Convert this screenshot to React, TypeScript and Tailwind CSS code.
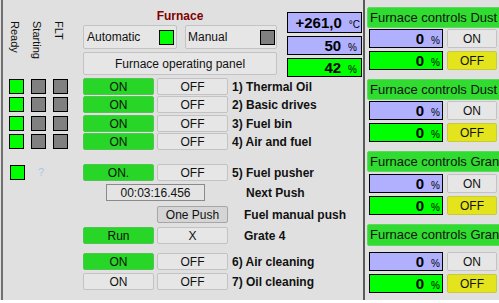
import React from 'react';

type Variant = 'green' | 'gray' | 'dark' | 'yellow';

const variantCls: Record<Variant, string> = {
  green: 'bg-[#27d627] border-[#52c452]',
  gray: 'bg-[#e6e6e6] border-[#c3c3c3]',
  dark: 'bg-[#d5d5d5] border-[#a6a6a6]',
  yellow: 'bg-[#e4e41c] border-[#c9c93a]',
};

const Btn: React.FC<{ label: string; variant?: Variant; className?: string }> = ({
  label,
  variant = 'gray',
  className = '',
}) => (
  <div
    className={`flex items-center justify-center rounded-[2px] border text-[12px] leading-none text-[#111] ${variantCls[variant]} ${className}`}
  >
    {label}
  </div>
);

const Lamp: React.FC<{ on?: boolean }> = ({ on }) => (
  <div className={`h-[15px] w-[15px] shrink-0 border border-black ${on ? 'bg-[#00ff00]' : 'bg-[#808080]'}`} />
);

const Val: React.FC<{ value: string; unit: string; green?: boolean; className?: string; pr?: string }> = ({
  value,
  unit,
  green,
  className = '',
  pr = 'pr-[4px]',
}) => (
  <div
    className={`flex items-center justify-end border border-black ${green ? 'bg-[#00ff00]' : 'bg-[#b0b0ff]'} ${pr} ${className}`}
  >
    <div className="flex items-baseline">
      <span className="text-[15px] font-bold leading-none text-black">{value}</span>
      <span className="ml-[7px] text-[10px] leading-none text-black">{unit}</span>
    </div>
  </div>
);

const Row: React.FC<{
  lamps?: boolean[];
  on: boolean;
  onLabel?: string;
  label: string;
  className?: string;
}> = ({ lamps, on, onLabel = 'ON', label, className = '' }) => (
  <div className={`flex h-[17px] items-center ${className}`}>
    <div className="flex w-[80px] gap-[7px] pl-[6px]">
      {lamps?.map((l, i) => <Lamp key={i} on={l} />)}
    </div>
    <Btn label={onLabel} variant={on ? 'green' : 'gray'} className="h-full w-[71px]" />
    <Btn label="OFF" className="ml-[3px] h-full w-[71px]" />
    <span className="ml-[4px] text-[12px] font-bold text-[#111]">{label}</span>
  </div>
);

const groups = [
  { title: 'Furnace controls Dust', mt: 'mt-[7px]', head: 'h-[21px]', gap: 'mt-[1px]' },
  { title: 'Furnace controls Dust', mt: 'mt-[9px]', head: 'h-[21px]', gap: 'mt-[1px]' },
  { title: 'Furnace controls Gran', mt: 'mt-[9px]', head: 'h-[21px]', gap: 'mt-[2px]' },
  { title: 'Furnace controls Gran', mt: 'mt-[9px]', head: 'h-[22px]', gap: 'mt-[6px]' },
];

export default function App() {
  return (
    <div className="flex h-[300px] w-[499px] overflow-hidden bg-[#e0e0e0] font-['Liberation_Sans',Arial,sans-serif]">
      <div className="w-px" />
      <div className="w-[2px] bg-[#707070]" />

      {/* Left panel */}
      <div className="w-[360px] shrink-0">
        {/* Top */}
        <div className="flex h-[78px]">
          <div className="flex w-[80px] gap-[10px] pl-[6px] pt-[21px]">
            {['Ready', 'Starting', 'FLT'].map((t) => (
              <span key={t} className="w-[12px] text-[11px] leading-[12px] text-[#111] [writing-mode:vertical-rl]">
                {t}
              </span>
            ))}
          </div>
          <div className="flex w-[194px] flex-col">
            <div className="h-[25px] pt-[9px] text-center text-[12px] font-bold leading-[14px] text-[#800000]">
              Furnace
            </div>
            <div className="flex h-[24px] gap-[8px]">
              <div className="flex w-[94px] items-center justify-between rounded-[2px] border border-[#c3c3c3] bg-[#e6e6e6] pl-[3px] pr-[2px] text-[12px] text-[#111]">
                Automatic
                <Lamp on />
              </div>
              <div className="flex w-[92px] items-center justify-between rounded-[2px] border border-[#c3c3c3] bg-[#e6e6e6] pl-[2px] pr-px text-[12px] text-[#111]">
                Manual
                <Lamp />
              </div>
            </div>
            <Btn label="Furnace operating panel" className="mt-[3px] h-[23px]" />
          </div>
          <div className="ml-[10px] flex w-[75px] flex-col gap-[3px] pt-[12px]">
            <Val value="+261,0" unit="°C" className="h-[21px]" pr="pr-px" />
            <Val value="50" unit="%" className="h-[19px]" />
            <Val value="42" unit="%" green className="h-[19px]" />
          </div>
        </div>

        {/* Rows */}
        <Row lamps={[true, false, false]} on label="1) Thermal Oil" />
        <Row lamps={[true, false, false]} on label="2) Basic drives" className="mt-px" />
        <Row lamps={[true, false, false]} on label="3) Fuel bin" className="mt-[2px]" />
        <Row lamps={[true, false, false]} on label="4) Air and fuel" className="mt-px" />

        <div className="mt-[14px] flex h-[17px] items-center">
          <div className="flex w-[80px] items-center pl-[7px]">
            <Lamp on />
            <span className="ml-[13px] text-[11px] text-[#a9c6ee]">?</span>
          </div>
          <Btn label="ON." variant="green" className="h-full w-[71px]" />
          <Btn label="OFF" className="ml-[3px] h-full w-[71px]" />
          <span className="ml-[4px] text-[12px] font-bold text-[#111]">5) Fuel pusher</span>
        </div>

        <div className="mt-[3px] flex h-[17px] items-center">
          <div className="w-[103px]" />
          <div className="flex h-full w-[99px] items-center justify-center border border-[#8a8a8a] bg-[#e4e4e4] text-[12px] text-[#111]">
            00:03:16.456
          </div>
          <span className="ml-[41px] text-[12px] font-bold text-[#111]">Next Push</span>
        </div>

        <div className="mt-[5px] flex h-[17px] items-center">
          <div className="w-[154px]" />
          <Btn label="One Push" variant="dark" className="h-full w-[71px]" />
          <span className="ml-[16px] text-[12px] font-bold text-[#111]">Fuel manual push</span>
        </div>

        <div className="mt-[4px] flex h-[17px] items-center">
          <div className="w-[80px]" />
          <Btn label="Run" variant="green" className="h-full w-[71px]" />
          <Btn label="X" className="ml-[3px] h-full w-[71px]" />
          <span className="ml-[16px] text-[12px] font-bold text-[#111]">Grate 4</span>
        </div>

        <Row on label="6) Air cleaning" className="mt-[9px]" />
        <Row on={false} label="7) Oil cleaning" className="mt-[3px]" />
      </div>

      <div className="w-[2px] shrink-0 bg-[#5a5a5a]" />

      {/* Right panel */}
      <div className="min-w-0 flex-1 overflow-hidden">
        {groups.map((g, i) => (
          <div key={i} className={g.mt}>
            <div
              className={`ml-[2px] flex ${g.head} w-[140px] items-center whitespace-nowrap rounded-[2px] border border-[#62d662] bg-[#2fdc2f] pl-[2px] text-[13px] text-[#111]`}
            >
              {g.title}
            </div>
            <div className={`ml-[4px] ${g.gap} flex h-[19px] gap-[4px]`}>
              <Val value="0" unit="%" className="w-[74px]" pr="pr-[2px]" />
              <Btn label="ON" className="w-[50px]" />
            </div>
            <div className="ml-[4px] mt-[3px] flex h-[19px] gap-[4px]">
              <Val value="0" unit="%" green className="w-[74px]" pr="pr-[2px]" />
              <Btn label="OFF" variant="yellow" className="w-[50px]" />
            </div>
          </div>
        ))}
      </div>
    </div>
  );
}
